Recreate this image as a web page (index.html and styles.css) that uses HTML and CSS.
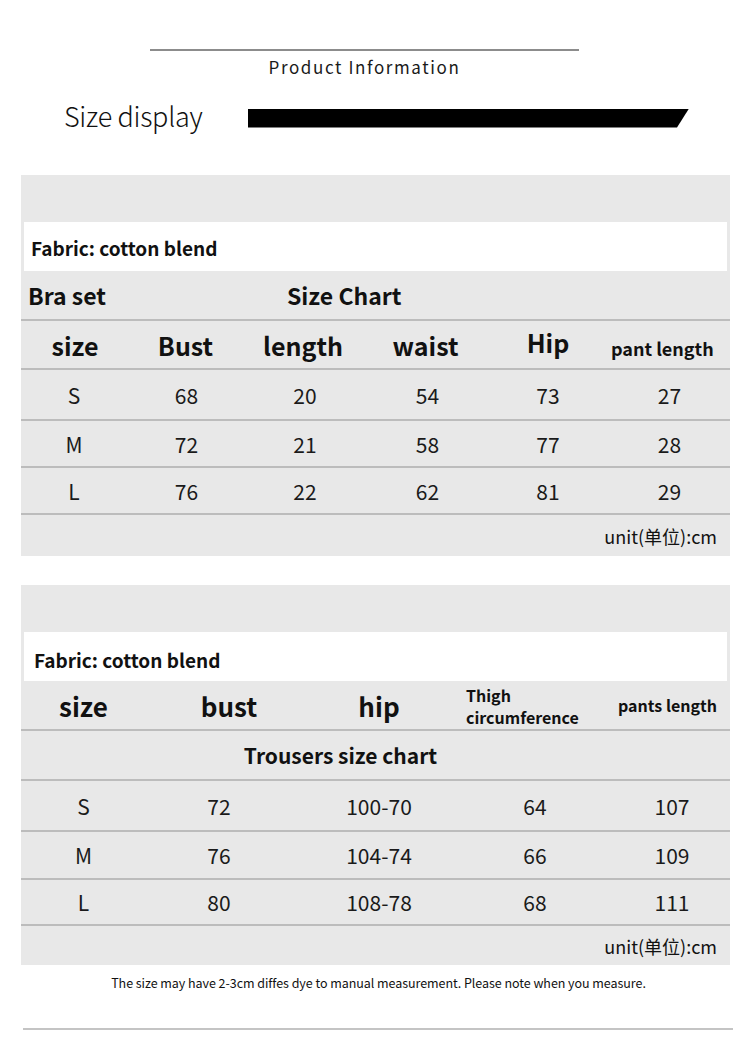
FILE: index.html
```html
<!DOCTYPE html>
<html>
<head>
<meta charset="utf-8">
<link rel="stylesheet" href="styles.css">
</head>
<body>
<div class="page">
  <div class="head">
    <div class="head-line"></div>
    <div class="head-title">Product Information</div>
  </div>
  <div class="display-row">
    <div class="display-title">Size display</div>
    <div class="display-bar"></div>
  </div>

  <section class="chart chart-top">
    <div class="fabric">Fabric: cotton blend</div>
    <div class="row row-title grid-a">
      <div class="bra">Bra set</div>
      <div class="chart-name">Size Chart</div>
    </div>
    <div class="row row-head grid-a">
      <div>size</div><div>Bust</div><div>length</div><div>waist</div><div class="hip">Hip</div><div class="small">pant length</div>
    </div>
    <div class="row row-data grid-a r1">
      <div>S</div><div>68</div><div>20</div><div>54</div><div>73</div><div>27</div>
    </div>
    <div class="row row-data grid-a r2">
      <div>M</div><div>72</div><div>21</div><div>58</div><div>77</div><div>28</div>
    </div>
    <div class="row row-data grid-a r3">
      <div>L</div><div>76</div><div>22</div><div>62</div><div>81</div><div>29</div>
    </div>
    <div class="unit">unit(单位):cm</div>
  </section>

  <section class="chart chart-bottom">
    <div class="fabric fabric-b">Fabric: cotton blend</div>
    <div class="row row-head grid-b">
      <div>size</div><div>bust</div><div>hip</div><div class="thigh">Thigh<br>circumference</div><div class="small2">pants length</div>
    </div>
    <div class="row row-title2">Trousers size chart</div>
    <div class="row row-data grid-b r1">
      <div>S</div><div>72</div><div>100-70</div><div>64</div><div>107</div>
    </div>
    <div class="row row-data grid-b r2">
      <div>M</div><div>76</div><div>104-74</div><div>66</div><div>109</div>
    </div>
    <div class="row row-data grid-b r3">
      <div>L</div><div>80</div><div>108-78</div><div>68</div><div>111</div>
    </div>
    <div class="unit">unit(单位):cm</div>
  </section>

  <p class="note">The size may have 2-3cm diffes dye to manual measurement. Please note when you measure.</p>
  <div class="foot-line"></div>
</div>
</body>
</html>
```

FILE: styles.css
```css
* { box-sizing: border-box; }
html, body { margin: 0; padding: 0; background: #fff; }
body {
  font-family: "Noto Sans CJK SC", "Noto Sans", sans-serif;
  color: #111;
  width: 750px;
}
.page { padding-top: 49px; }

.head { width: 429px; margin-left: 150px; }
.head-line { height: 2px; background: #8c8c8c; }
.head-title {
  text-align: center;
  font-size: 17px;
  line-height: 22px;
  letter-spacing: 1.6px;
  margin-top: 5px;
  color: #1a1a1a;
}

.display-row {
  display: flex;
  align-items: center;
  height: 40px;
  margin-top: 20px;
  padding-left: 64px;
}
.display-title {
  font-size: 27px;
  font-weight: 300;
  letter-spacing: -0.3px;
  width: 184px;
  color: #111;
  position: relative;
  top: -3px;
}
.display-bar {
  width: 441px;
  height: 19px;
  background: #000;
  clip-path: polygon(0 0, 100% 0, calc(100% - 12px) 100%, 0 100%);
}

.chart {
  margin-left: 21px;
  width: 709px;
  background: #e8e8e8;
  padding-top: 47px;
}
.chart-top { margin-top: 37px; }
.chart-bottom { margin-top: 29px; }

.fabric {
  margin: 0 3px;
  background: #fff;
  height: 49px;
  display: flex;
  align-items: center;
  padding-left: 7px;
  padding-top: 2px;
  font-size: 19px;
  font-weight: 700;
  color: #111;
}
.fabric-b { padding-left: 10px; padding-top: 6px; }

.row { border-bottom: 2px solid #bcbcbc; }
.grid-a {
  display: grid;
  grid-template-columns: 108px 113px 122px 123px 122px 121px;
}
.grid-b {
  display: grid;
  grid-template-columns: 125px 160px 146px 166px 112px;
}
.grid-a > div, .grid-b > div { text-align: center; }

.row-title {
  height: 50px;
  align-items: center;
  font-weight: 700;
  font-size: 23px;
}
.row-title .bra { text-align: left; padding-left: 7px; }
.row-title .chart-name { grid-column: 3 / 5; text-align: left; padding-left: 45px; }

.row-head {
  height: 49px;
  align-items: center;
  font-weight: 700;
  font-size: 25px;
  color: #111;
}
.row-head .hip { position: relative; top: -3px; }
.row-head .small { font-size: 18px; padding-top: 6px; text-align: left; padding-left: 2px; white-space: nowrap; }
.chart-bottom .row-head { height: 50px; font-size: 26px; }
.row-head .thigh {
  font-size: 16px;
  line-height: 22px;
  text-align: left;
  padding-left: 14px;
  padding-top: 2px;
}
.row-head .small2 { font-size: 16px; text-align: left; padding-left: 0; white-space: nowrap; }

.row-title2 {
  height: 50px;
  display: flex;
  align-items: center;
  justify-content: center;
  padding-right: 70px;
  font-weight: 700;
  font-size: 21px;
}

.row-data {
  align-items: center;
  font-size: 21px;
  color: #1a1a1a;
}
.chart-top .r1 { height: 51px; }
.chart-top .r2 { height: 47px; }
.chart-top .r3 { height: 47px; }
.chart-bottom .r1 { height: 51px; }
.chart-bottom .r2 { height: 48px; }
.chart-bottom .r3 { height: 46px; }

.chart-top .row-data > div:nth-child(1) { padding-right: 2px; }
.chart-top .row-data > div:nth-child(2) { padding-left: 2px; }
.chart-top .row-data > div:nth-child(3) { padding-left: 4px; }
.chart-top .row-data > div:nth-child(4) { padding-left: 4px; }
.chart-top .row-data > div:nth-child(6) { padding-left: 0; }
.chart-bottom .row-data > div:nth-child(2) { padding-right: 14px; }
.chart-bottom .row-data > div:nth-child(4) { padding-left: 0; }
.chart-bottom .row-data > div:nth-child(5) { padding-right: 4px; }
.chart-bottom .row-head > div:nth-child(2) { padding-left: 6px; }

.unit {
  height: 41px;
  display: flex;
  align-items: center;
  justify-content: flex-end;
  padding-right: 13px;
  font-size: 18px;
  font-weight: 400;
  color: #111;
}
.chart-bottom .unit { height: 39px; }

.note {
  margin: 9px 0 0;
  text-align: center;
  font-size: 12.5px;
  line-height: 18px;
  letter-spacing: -0.05px;
  color: #111;
  padding-left: 7px;
}
.foot-line {
  margin: 36px 0 0 23px;
  width: 710px;
  height: 2px;
  background: #c4c4c4;
}
```
